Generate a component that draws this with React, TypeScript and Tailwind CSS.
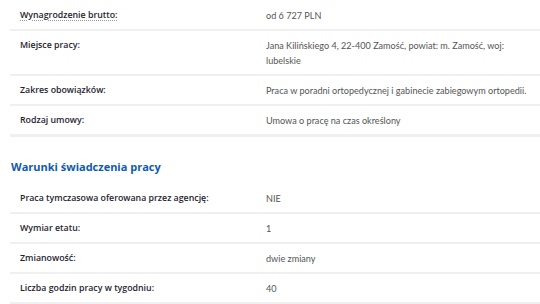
import React from "react";

type Row = { label: string; value: string; abbr?: boolean };

const section1: Row[] = [
  { label: "Wynagrodzenie brutto:", value: "od 6 727 PLN", abbr: true },
  { label: "Miejsce pracy:", value: "Jana Kilińskiego 4, 22-400 Zamość, powiat: m. Zamość, woj: lubelskie" },
  { label: "Zakres obowiązków:", value: "Praca w poradni ortopedycznej i gabinecie zabiegowym ortopedii." },
  { label: "Rodzaj umowy:", value: "Umowa o pracę na czas określony" },
];

const section2: Row[] = [
  { label: "Praca tymczasowa oferowana przez agencję:", value: "NIE" },
  { label: "Wymiar etatu:", value: "1" },
  { label: "Zmianowość:", value: "dwie zmiany" },
  { label: "Liczba godzin pracy w tygodniu:", value: "40" },
];

function Rows({ rows }: { rows: Row[] }) {
  return (
    <div>
      {rows.map((r, i) => (
        <div
          key={i}
          className={`flex border-b-2 border-[#f0f0f0] pt-[7px] pb-[6px] leading-[15px] ${
            i === rows.length - 1 ? "border-b-[3px]" : ""
          }`}
        >
          <div
            className="w-[256px] shrink-0 pl-[10px] text-[8.8px] font-semibold text-[#1f2430]"
            style={{ fontFamily: '"Open Sans", "Noto Sans", sans-serif' }}
          >
            {r.abbr ? (
              <span className="underline decoration-dotted decoration-[#999] underline-offset-2">{r.label}</span>
            ) : (
              r.label
            )}
          </div>
          <div
            className="flex-1 pr-[10px] text-[9.1px] text-[#555]"
            style={{ fontFamily: 'Lato, "Open Sans", sans-serif' }}
          >
            {r.value}
          </div>
        </div>
      ))}
    </div>
  );
}

export default function App() {
  return (
    <div
      className="w-[540px] h-[304px] overflow-hidden bg-white pl-[10px] pt-[1px]"
      style={{ fontFamily: '"Open Sans", "Noto Sans", sans-serif' }}
    >
      <Rows rows={section1} />
      <h2 className="mt-[20px] mb-[7px] pl-[1px] text-[11px] leading-[20px] font-bold text-[#0f5bad]">
        Warunki świadczenia pracy
      </h2>
      <Rows rows={section2} />
    </div>
  );
}
